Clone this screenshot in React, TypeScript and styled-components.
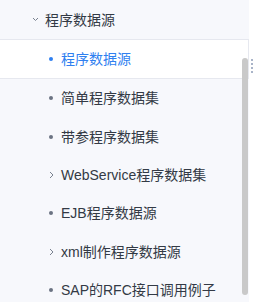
import React from "react";
import styled, { createGlobalStyle } from "styled-components";

const GlobalStyle = createGlobalStyle`
  body {
    margin: 0;
    background: #ffffff;
    font-family: "Liberation Sans", "Noto Sans CJK SC", sans-serif;
  }
`;

type Kind = "dot" | "arrow";

const items: { label: string; kind: Kind }[] = [
  { label: "简单程序数据集", kind: "dot" },
  { label: "带参程序数据集", kind: "dot" },
  { label: "WebService程序数据集", kind: "arrow" },
  { label: "EJB程序数据源", kind: "dot" },
  { label: "xml制作程序数据源", kind: "arrow" },
  { label: "SAP的RFC接口调用例子", kind: "dot" },
];

const Frame = styled.div`
  display: flex;
  width: 264px;
  height: 302px;
  overflow: hidden;
`;

const Panel = styled.div`
  position: relative;
  width: 249px;
  height: 302px;
  background: #f7f8fc;
  overflow: hidden;
`;

const GroupRow = styled.div`
  display: flex;
  align-items: center;
  height: 39px;
  padding-left: 32px;
  gap: 6px;
  font-size: 14px;
  color: #333a45;
`;

const Row = styled.div<{ $active?: boolean }>`
  display: flex;
  align-items: center;
  box-sizing: border-box;
  height: ${(p) => (p.$active ? "40px" : "38.4px")};
  padding-left: 47px;
  font-size: 14px;
  color: ${(p) => (p.$active ? "#2f7ff0" : "#333a45")};
  background: ${(p) => (p.$active ? "#ffffff" : "transparent")};
  border: ${(p) => (p.$active ? "1px solid #e6e8ef" : "none")};
  border-left: none;
`;

const Marker = styled.span`
  display: flex;
  align-items: center;
  justify-content: center;
  width: 8px;
  margin-right: 6px;
`;

const Dot = styled.span<{ $active?: boolean }>`
  width: 4px;
  height: 4px;
  border-radius: 50%;
  background: ${(p) => (p.$active ? "#2f7ff0" : "#6b7382")};
`;

const Label = styled.span`
  white-space: nowrap;
  line-height: 20px;
`;

const Thumb = styled.div`
  position: absolute;
  left: 242px;
  top: 58px;
  width: 6px;
  height: 237px;
  border-radius: 3px;
  background: #c9c9c9;
`;

const Side = styled.div`
  display: flex;
  flex-direction: column;
  gap: 2px;
  padding: 59px 0 0 2px;
`;

const Grip = styled.span`
  width: 2px;
  height: 2px;
  background: #a9b4c8;
`;

const ChevronDown = () => (
  <svg width="7" height="5" viewBox="0 0 7 5">
    <path d="M1 1l2.5 2.5L6 1" fill="none" stroke="#7a8290" strokeWidth="1" />
  </svg>
);

const ChevronRight = () => (
  <svg width="5" height="8" viewBox="0 0 5 8">
    <path d="M1 1l3 3-3 3" fill="none" stroke="#7a8290" strokeWidth="1" />
  </svg>
);

export default function App() {
  return (
    <>
      <GlobalStyle />
      <Frame>
        <Panel>
          <GroupRow>
            <ChevronDown />
            <Label>程序数据源</Label>
          </GroupRow>
          <Row $active>
            <Marker>
              <Dot $active />
            </Marker>
            <Label>程序数据源</Label>
          </Row>
          {items.map((it) => (
            <Row key={it.label}>
              <Marker>{it.kind === "dot" ? <Dot /> : <ChevronRight />}</Marker>
              <Label>{it.label}</Label>
            </Row>
          ))}
          <Thumb />
        </Panel>
        <Side>
          <Grip />
          <Grip />
          <Grip />
          <Grip />
        </Side>
      </Frame>
    </>
  );
}
